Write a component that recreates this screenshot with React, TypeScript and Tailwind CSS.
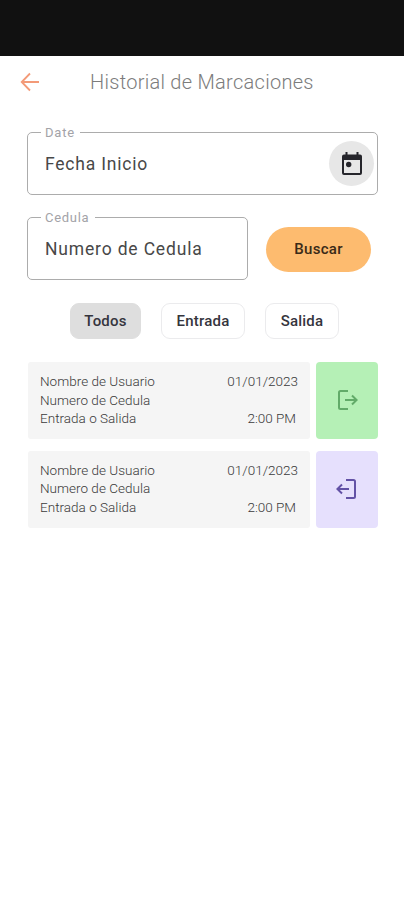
import type { ReactNode } from "react";
import clsx from "clsx";

interface OutlinedFieldProps {
  label: string;
  value: string;
  className?: string;
  valueClassName?: string;
  labelClassName?: string;
  children?: ReactNode; // trailing action
}

const OutlinedField = ({
  label,
  value,
  className,
  valueClassName,
  labelClassName,
  children,
}: OutlinedFieldProps) => (
  <div
    className={clsx(
      "relative flex h-[63px] items-center justify-between rounded-[5px] border-[1.5px] border-[#acacac] pl-[17px] pr-[3px]",
      className
    )}
  >
    {/* Floating label sits on top of the border */}
    <span
      className={clsx(
        "absolute -top-[8px] left-[13px] bg-white pl-[4px] text-[13px] leading-4 text-[#a3a3a8]",
        labelClassName
      )}
    >
      {label}
    </span>
    <span className={clsx("text-[17.5px] leading-6 text-[#484848]", valueClassName)}>{value}</span>
    {children}
  </div>
);

const BackIcon = () => (
  <svg width="20" height="20" viewBox="0 0 20 20" fill="none" stroke="#f39a78" strokeWidth="1.8">
    <path d="M19 10H2M10 1.5L1.7 10L10 18.5" />
  </svg>
);

const CalendarIcon = () => (
  <svg width="20" height="23" viewBox="0 0 20 23" fill="#25252b">
    <path d="M3.5 0h2v2.5h9V0h2v2.5h1.5a2 2 0 0 1 2 2V21a2 2 0 0 1-2 2H2a2 2 0 0 1-2-2V4.5a2 2 0 0 1 2-2h1.5zM2 8V21h16V8z" />
    <circle cx="6.7" cy="12.5" r="2.7" />
  </svg>
);

const ExitIcon = () => (
  <svg width="20" height="20" viewBox="0 0 20 20" fill="none" stroke="#62ab69" strokeWidth="2">
    <path d="M10 1H2.5Q1 1 1 2.5V17.5Q1 19 2.5 19H10M7 10H18.5M14 5.5L18.6 10L14 14.5" />
  </svg>
);

const EnterIcon = () => (
  <svg width="20" height="20" viewBox="0 0 20 20" fill="none" stroke="#6352a6" strokeWidth="2">
    <path d="M10 1H17.5Q19 1 19 2.5V17.5Q19 19 17.5 19H10M13 10H1.5M6 5.5L1.4 10L6 14.5" />
  </svg>
);

const filters = [
  { name: "Todos", style: "w-[71px] border-[#dedede] bg-[#dedede]" },
  { name: "Entrada", style: "w-[84px] border-[#ebebed] bg-white" },
  { name: "Salida", style: "w-[74px] border-[#ebebed] bg-white" },
];

const records = [
  { id: 1, type: "salida", date: "01/01/2023", time: "2:00 PM" },
  { id: 2, type: "entrada", date: "01/01/2023", time: "2:00 PM" },
];

export default function App() {
  return (
    <div className="h-[900px] w-[404px] overflow-hidden bg-white font-['Roboto',sans-serif]">
      {/* Status bar */}
      <div className="h-[56px] bg-[#111111]" />

      <header className="flex h-[51px] items-center pl-5">
        <button aria-label="Volver">
          <BackIcon />
        </button>
        <h1 className="ml-[50px] whitespace-nowrap text-[20px] font-light leading-6 tracking-[0.28px] text-[#7c7c7c]">
          Historial de Marcaciones
        </h1>
      </header>

      <main className="pl-[27px] pr-[26px] pt-[25px]">
        <OutlinedField
          label="Date"
          value="Fecha Inicio"
          labelClassName="w-[39px] tracking-[0.8px]"
          valueClassName="tracking-[0.8px]"
        >
          <button
            aria-label="Elegir fecha"
            className="flex h-[45px] w-[45px] items-center justify-center rounded-full bg-[#e7e7e7]"
          >
            <CalendarIcon />
          </button>
        </OutlinedField>

        <div className="mt-[22px] flex items-center">
          <OutlinedField
            label="Cedula"
            value="Numero de Cedula"
            className="w-[221px]"
            labelClassName="w-[54px] tracking-[0.7px]"
            valueClassName="tracking-[0.83px]"
          />
          <button className="ml-[18px] mt-[2px] h-[45px] w-[105px] rounded-full bg-[#fdbb6f] text-[15px] font-medium tracking-[0.3px] text-[#3a2a18]">
            Buscar
          </button>
        </div>

        {/* Filter chips */}
        <div className="ml-[43px] mt-[23px] flex gap-5">
          {filters.map((f) => (
            <button
              key={f.name}
              className={clsx(
                "h-[36px] rounded-[9px] border text-[15px] font-medium tracking-[0.2px] text-[#35353d]",
                f.style
              )}
            >
              {f.name}
            </button>
          ))}
        </div>

        <ul className="mt-[23px] flex flex-col gap-[11.5px] pl-px">
          {records.map((r) => (
            <li key={r.id} className="flex h-[77px] gap-[6px]">
              <div className="flex flex-1 justify-between rounded-[3px] bg-[#f5f5f5] px-[12px] pt-[10px] text-[13.5px] font-light leading-[18.5px] text-[#3a3a3a]">
                <div className="tracking-[0.02px]">
                  <p>Nombre de Usuario</p>
                  <p>Numero de Cedula</p>
                  <p>Entrada o Salida</p>
                </div>
                <div className="flex flex-col text-right">
                  <p>{r.date}</p>
                  <p className="mt-[18.5px] pr-[2px]">{r.time}</p>
                </div>
              </div>
              <div
                className={clsx(
                  "flex w-[62px] items-center justify-center rounded-[4px] pb-px",
                  r.type === "salida" ? "bg-[#b5f0b6]" : "bg-[#e6e0fd]"
                )}
              >
                {r.type === "salida" ? (
                  <span className="ml-[2px]"><ExitIcon /></span>
                ) : (
                  <span className="mr-[2px]"><EnterIcon /></span>
                )}
              </div>
            </li>
          ))}
        </ul>
      </main>
    </div>
  );
}
